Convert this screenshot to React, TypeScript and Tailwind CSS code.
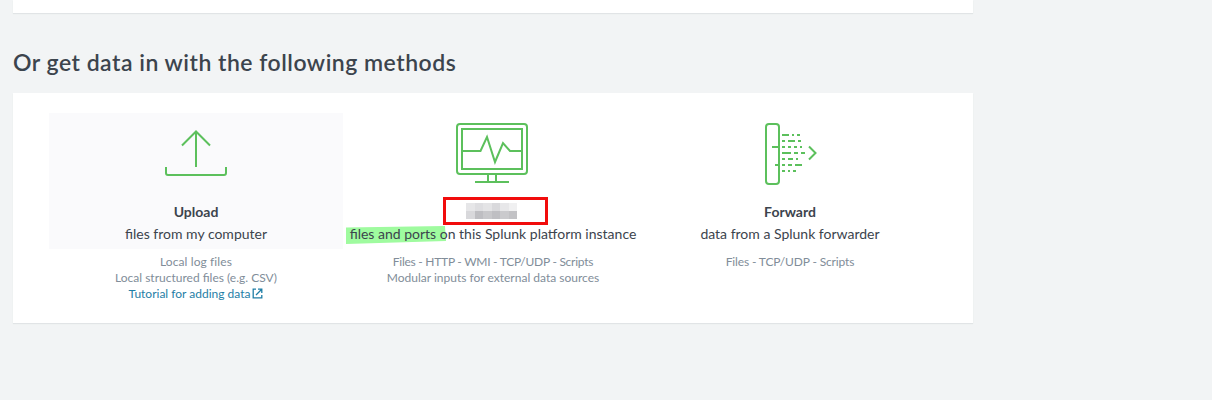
import React from 'react';

function Line({ className = '', children }: { className?: string; children: React.ReactNode }) {
  return (
    <div className={`flex items-center justify-center whitespace-nowrap ${className}`}>
      <span>{children}</span>
    </div>
  );
}

function UploadIcon() {
  return (
    <svg width="100" height="76" viewBox="146 115 100 76" fill="none" stroke="#5cc05c" strokeWidth="2">
      <path d="M196 167V131M182 145.500L196 131.500L210 145.500M166 167V173Q166 175 168 175H224Q226 175 226 173V167" />
    </svg>
  );
}

function MonitorIcon() {
  return (
    <svg width="100" height="76" viewBox="443 115 100 76" fill="none" stroke="#5cc05c" strokeWidth="2">
      <rect x="457" y="124" width="70" height="50" rx="3" />
      <rect x="462" y="129" width="60" height="40" />
      <path d="M462 151H480.500L487 137L495 162L503 143L510 151H522M488 174V182M496 174V182M475 182H509" />
    </svg>
  );
}

function ForwardIcon() {
  return (
    <svg width="100" height="76" viewBox="740 115 100 76" fill="none" stroke="#5cc05c" strokeWidth="2">
      <rect x="766" y="124" width="13" height="60" rx="3" />
      <path d="M782 135h7M792 135h2M797 135h3M782 141h3M788 141h7M798 141h3M772 147h7M782 147h3M788 147h3M794 147h3M800 147h2M782 153h9M794 153h4M801 153h4M782 159h3M788 159h5M796 159h2M775 165h4M782 165h3M788 165h4M795 165h7M782 171h3M788 171h2M793 171h3M809 146.500L815.500 153L809 159.500" />
    </svg>
  );
}

function ExternalIcon() {
  return (
    <svg className="mb-px ml-[2px]" width="11" height="11" viewBox="0 0 11 11" fill="none" stroke="#1f7ea6" strokeWidth="1.300">
      <path d="M4 1.200H1.200V9.800H9.800V7M6 1.200H9.800V5M9.500 1.500L4 7" />
    </svg>
  );
}

function CensoredLabel() {
  return (
    <div className="grid h-4 w-[51px] grid-cols-6 grid-rows-2">
      <i className="bg-[#e6e6e8]" /><i className="bg-[#dedee1]" /><i className="bg-[#e4e4e6]" />
      <i className="bg-[#d9d9dc]" /><i className="bg-[#e7e7e9]" /><i className="bg-[#f0f0f1]" />
      <i className="bg-[#d8d8db]" /><i className="bg-[#bebec2]" /><i className="bg-[#c8c8cb]" />
      <i className="bg-[#bfbfc3]" /><i className="bg-[#cacacd]" /><i className="bg-[#c2c2c5]" />
    </div>
  );
}

export default function App() {
  return (
    <main className="h-[400px] w-[1212px] overflow-hidden bg-[#f2f4f5] pl-[13px] font-['Lato','Liberation_Sans',sans-serif] text-[#3c444d]">
      <section className="h-[13px] w-[960px] bg-white shadow-[0_1px_1px_#e1e4e6]" />
      <h1 className="mt-[32px] flex h-[34px] items-center text-[23px] font-semibold tracking-[0.5px] whitespace-nowrap">
        <span>Or get data in with the following methods</span>
      </h1>
      <section className="mt-[14px] flex h-[230px] w-[960px] gap-[3px] bg-white pt-5 pl-9 shadow-[0_1px_1px_#e1e4e6]">
        <div className="w-[294px]">
          <div className="flex h-[136px] flex-col items-center bg-[#fafafc] pt-[2px]">
            <UploadIcon />
            <Line className="mt-[9px] h-[22px] text-[14px] font-bold">Upload</Line>
            <Line className="h-[22px] text-[14px]">files from my computer</Line>
          </div>
          <div className="pt-[5px] text-[12px] leading-4 text-[#818d99]">
            <Line className="tracking-[0.1px]">Local log files</Line>
            <Line>Local structured files (e.g. CSV)</Line>
            <div className="flex items-center justify-center whitespace-nowrap text-[#1f7ea6]">
              <span>Tutorial for adding data</span>
              <ExternalIcon />
            </div>
          </div>
        </div>
        <div className="relative w-[294px]">
          <div className="relative flex h-[136px] flex-col items-center pt-[2px]">
            <svg className="absolute top-[113px] left-0" width="100" height="18" viewBox="0 0 100 18">
              <path d="M0 1.500L99 0L100 15L0 18Z" fill="#9ffb9f" />
            </svg>
            <MonitorIcon />
            <div className="mt-[9px] flex h-[22px] items-center justify-center pr-[3px]">
              <CensoredLabel />
            </div>
            <Line className="relative h-[22px] text-[14px]">files and ports on this Splunk platform instance</Line>
          </div>
          <div className="absolute top-[84px] left-[97px] h-[28px] w-[105px] border-3 border-[#f10c0c]" />
          <div className="pt-[5px] text-[12px] leading-4 text-[#818d99]">
            <Line className="tracking-[-0.26px]">Files - HTTP - WMI - TCP/UDP - Scripts</Line>
            <Line>Modular inputs for external data sources</Line>
          </div>
        </div>
        <div className="w-[294px]">
          <div className="flex h-[136px] flex-col items-center pt-[2px]">
            <ForwardIcon />
            <Line className="mt-[9px] h-[22px] text-[14px] font-bold">Forward</Line>
            <Line className="h-[22px] text-[14px]">data from a Splunk forwarder</Line>
          </div>
          <div className="pt-[5px] text-[12px] leading-4 text-[#818d99]">
            <Line className="tracking-[-0.14px]">Files - TCP/UDP - Scripts</Line>
          </div>
        </div>
      </section>
    </main>
  );
}
